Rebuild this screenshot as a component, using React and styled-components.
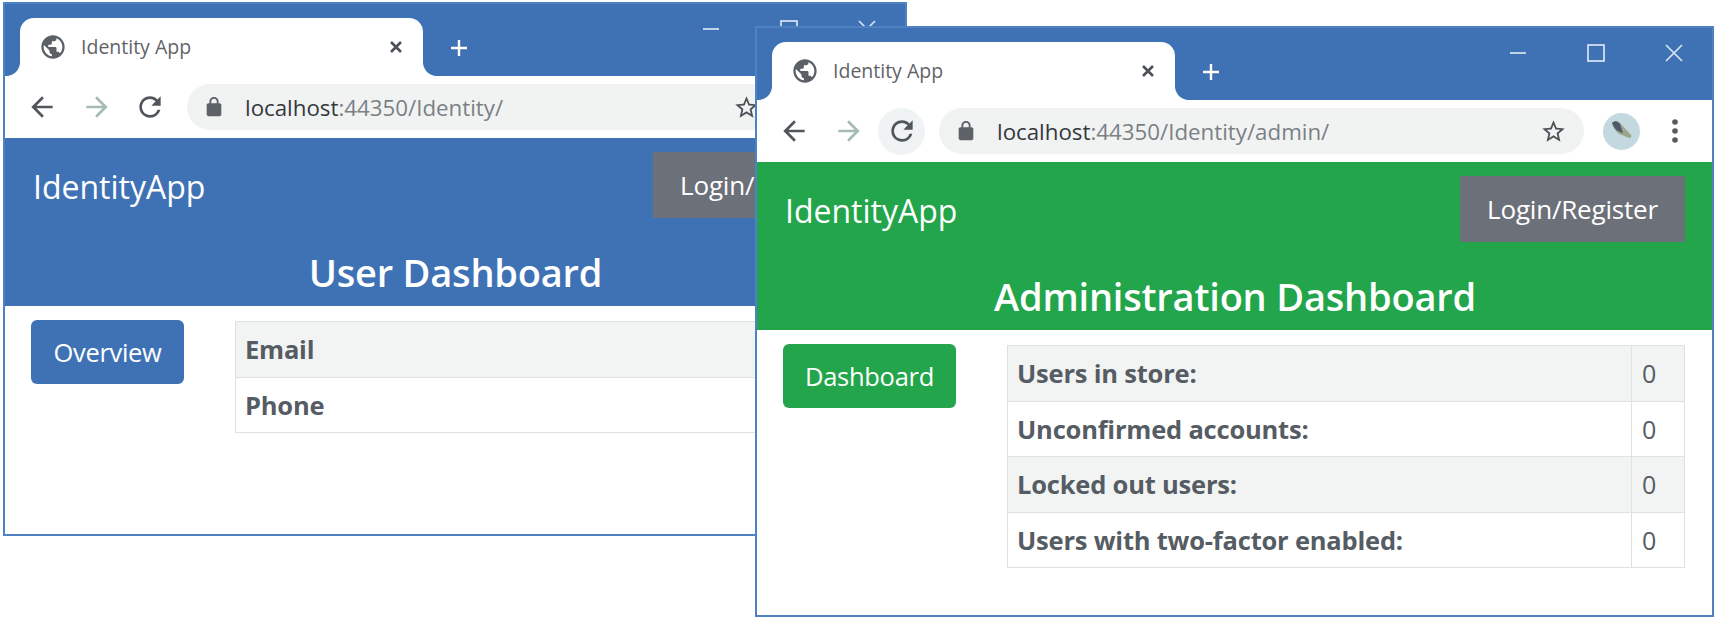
import React from 'react';
import styled, { createGlobalStyle } from 'styled-components';

const GlobalStyle = createGlobalStyle`
  html, body {
    margin: 0;
    padding: 0;
    background: #fff;
    font-family: "Open Sans", "Noto Sans", sans-serif;
  }
`
const Desktop = styled.div`
  position: relative;
  width: 1718px;
  height: 620px;
  overflow: hidden;
  background: #fff;
`
const Window = styled.div`
  position: absolute;
  left: ${p => p.$left}px;
  top: ${p => p.$top}px;
  width: ${p => p.$width}px;
  height: ${p => p.$height}px;
  box-sizing: border-box;
  border: 2px solid #4f82c2;
  background: #fff;
  display: flex;
  flex-direction: column;
  overflow: hidden;
`
const TabStrip = styled.div`
  height: 72px;
  flex: none;
  box-sizing: border-box;
  padding: 14px 0 0 15px;
  background: #3f72b5;
  display: flex;
  align-items: flex-start;
`
const Tab = styled.div`
  position: relative;
  width: 403px;
  height: 58px;
  box-sizing: border-box;
  padding: 0 19px 0 19px;
  background: #fff;
  border-radius: 14px 14px 0 0;
  display: flex;
  align-items: center;
  gap: 14px;
  &::before, &::after {
    content: '';
    position: absolute;
    bottom: 0;
    width: 14px;
    height: 14px;
  }
  &::before {
    left: -14px;
    background: radial-gradient(circle at 0 0, #3f72b5 13.5px, #fff 14.5px);
  }
  &::after {
    right: -14px;
    background: radial-gradient(circle at 100% 0, #3f72b5 13.5px, #fff 14.5px);
  }
`
const TabTitle = styled.span`
  flex: 1;
  font-size: 19.5px;
  color: #5f6368;
  margin-top: -2px;
`
const GlobeIcon = styled.svg`
  width: 28px;
  height: 28px;
  fill: #5a6066;
  flex: none;
`
const TabClose = styled.svg`
  width: 16px;
  height: 16px;
  stroke: #4c5157;
  stroke-width: 2.6;
  fill: none;
  flex: none;
`
const NewTab = styled.svg`
  width: 20px;
  height: 20px;
  margin: 20px 0 0 26px;
  stroke: #fff;
  stroke-width: 2.4;
  fill: none;
  flex: none;
`
const WindowControls = styled.div`
  margin: -14px 0 0 auto;
  padding: 0 29px 0 0;
  display: flex;
  gap: 60px;
  align-items: center;
  height: 50px;
`
const ControlIcon = styled.svg`
  width: 18px;
  height: 18px;
  stroke: #d9e5f2;
  stroke-width: 1.7;
  fill: none;
  flex: none;
`
const Toolbar = styled.div`
  height: 62px;
  flex: none;
  box-sizing: border-box;
  padding: 0 33px 0 13px;
  background: #fff;
  display: flex;
  align-items: center;
`
const NavIcon = styled.svg`
  width: 32px;
  height: 32px;
  flex: none;
  fill: ${p => p.$dim ? '#a6bbb8' : '#50565c'};
`
const NavSlot = styled.div`
  width: 47px;
  height: 47px;
  flex: none;
  margin-left: ${p => p.$gap}px;
  border-radius: 50%;
  background: ${p => p.$active ? '#f0f3f3' : 'transparent'};
  display: flex;
  align-items: center;
  justify-content: center;
`
const Omnibox = styled.div`
  flex: 1;
  height: 46px;
  margin-left: 14px;
  box-sizing: border-box;
  padding: 0 17px 0 16px;
  border-radius: 23px;
  background: #f1f3f3;
  display: flex;
  align-items: center;
`
const LockIcon = styled.svg`
  width: 22px;
  height: 22px;
  fill: #5c6268;
  flex: none;
`
const Url = styled.span`
  flex: 1;
  margin-left: 20px;
  font-size: 22.3px;
  color: #7b8084;
  white-space: nowrap;
`
const UrlHost = styled.span`
  color: #33383c;
`
const StarIcon = styled.svg`
  width: 27px;
  height: 27px;
  fill: #4c5157;
  flex: none;
`
const Avatar = styled.svg`
  width: 37px;
  height: 37px;
  flex: none;
  margin-left: 19px;
`
const MenuDots = styled.svg`
  width: 8px;
  height: 28px;
  flex: none;
  margin-left: 31px;
  fill: #565b60;
`
const Banner = styled.div`
  height: 168px;
  flex: none;
  box-sizing: border-box;
  padding: 14px 27px 0 28px;
  background: ${p => p.$color};
  color: #fff;
`
const NavRow = styled.div`
  display: flex;
  justify-content: space-between;
  align-items: center;
`
const Brand = styled.div`
  font-size: 32px;
  padding-top: 2px;
`
const LoginButton = styled.div`
  width: 225px;
  height: 66px;
  background: #6c7079;
  font-size: 26px;
  letter-spacing: -0.2px;
  display: flex;
  align-items: center;
  justify-content: center;
  box-sizing: border-box;
`
const Title = styled.h1`
  margin: 30px 0 0;
  font-size: 38px;
  line-height: 48px;
  font-weight: 600;
  text-align: center;
  letter-spacing: -0.2px;
`
const Body = styled.div`
  flex: 1;
  display: flex;
  align-items: flex-start;
  padding: 14px 27px 0 26px;
`
const Sidebar = styled.div`
  width: ${p => p.$width}px;
  flex: none;
`
const SideButton = styled.div`
  display: inline-flex;
  align-items: center;
  justify-content: center;
  width: ${p => p.$width}px;
  height: 64px;
  box-sizing: border-box;
  border-radius: 6px;
  background: ${p => p.$color};
  color: #fff;
  font-size: 25.5px;
  letter-spacing: -0.3px;
`
const Table = styled.table`
  flex: 1;
  border-collapse: collapse;
  table-layout: fixed;
  margin-top: 1px;
`
const Row = styled.tr`
  height: 55.6px;
  background: ${p => p.$striped ? '#f2f4f3' : '#fff'};
`
const LabelCell = styled.th`
  border: 1px solid #dee2e6;
  padding: 0 9px;
  font-size: 25.5px;
  font-weight: 700;
  letter-spacing: -0.2px;
  text-align: left;
  color: #555c63;
  white-space: nowrap;
`
const ValueCell = styled.td`
  width: 32px;
  border: 1px solid #dee2e6;
  padding: 0 10px;
  font-size: 25px;
  color: #555c63;
`

const paths = {
  globe: 'M12 2C6.48 2 2 6.48 2 12s4.48 10 10 10 10-4.48 10-10S17.52 2 12 2zm-1 17.93c-3.95-.49-7-3.85-7-7.93 0-.62.08-1.21.21-1.79L9 15v1c0 1.1.9 2 2 2v1.93zm6.9-2.54c-.26-.81-1-1.39-1.9-1.39h-1v-3c0-.55-.45-1-1-1H8v-2h2c.55 0 1-.45 1-1V7h2c1.1 0 2-.9 2-2v-.41c2.93 1.19 5 4.06 5 7.41 0 2.08-.8 3.97-2.1 5.39z',
  back: 'M20 11H7.83l5.59-5.59L12 4l-8 8 8 8 1.41-1.41L7.83 13H20v-2z',
  forward: 'M12 4l-1.41 1.41L16.17 11H4v2h12.17l-5.58 5.59L12 20l8-8z',
  reload: 'M17.65 6.35A7.958 7.958 0 0012 4c-4.42 0-7.99 3.58-7.99 8s3.57 8 7.99 8c3.73 0 6.84-2.55 7.73-6h-2.08A5.99 5.99 0 0112 18c-3.31 0-6-2.69-6-6s2.69-6 6-6c1.66 0 3.14.69 4.22 1.78L13 11h7V4l-2.35 2.35z',
  lock: 'M18 8h-1V6c0-2.76-2.24-5-5-5S7 3.24 7 6v2H6c-1.1 0-2 .9-2 2v10c0 1.1.9 2 2 2h12c1.1 0 2-.9 2-2V10c0-1.1-.9-2-2-2zM9 6c0-1.66 1.34-3 3-3s3 1.34 3 3v2H9V6z',
  star: 'M22 9.24l-7.19-.62L12 2 9.19 8.63 2 9.24l5.46 4.73L5.82 21 12 17.27 18.18 21l-1.63-7.03L22 9.24zM12 15.4l-3.76 2.27 1-4.28-3.32-2.88 4.38-.38L12 6.1l1.71 4.04 4.38.38-3.32 2.88 1 4.28L12 15.4z',
}

const BrowserWindow = ({ left, top, width, height, path, color, heading, sideLabel, sideWidth, sideColumn, rows, active }) => (
  <Window $left={left} $top={top} $width={width} $height={height}>
    <TabStrip>
      <Tab>
        <GlobeIcon viewBox="0 0 24 24"><path d={paths.globe} /></GlobeIcon>
        <TabTitle>Identity App</TabTitle>
        <TabClose viewBox="0 0 16 16"><path d="M3 3l10 10M13 3L3 13" /></TabClose>
      </Tab>
      <NewTab viewBox="0 0 20 20"><path d="M10 2v16M2 10h16" /></NewTab>
      <WindowControls>
        <ControlIcon viewBox="0 0 18 18"><path d="M1 9h16" /></ControlIcon>
        <ControlIcon viewBox="0 0 18 18"><rect x="1" y="1" width="16" height="16" /></ControlIcon>
        <ControlIcon viewBox="0 0 18 18"><path d="M1 1l16 16M17 1L1 17" /></ControlIcon>
      </WindowControls>
    </TabStrip>
    <Toolbar>
      <NavSlot $gap={0}><NavIcon viewBox="0 0 24 24"><path d={paths.back} /></NavIcon></NavSlot>
      <NavSlot $gap={8}><NavIcon $dim viewBox="0 0 24 24"><path d={paths.forward} /></NavIcon></NavSlot>
      <NavSlot $gap={6} $active={active}><NavIcon viewBox="0 0 24 24"><path d={paths.reload} /></NavIcon></NavSlot>
      <Omnibox>
        <LockIcon viewBox="0 0 24 24"><path d={paths.lock} /></LockIcon>
        <Url><UrlHost>localhost</UrlHost>{path}</Url>
        <StarIcon viewBox="0 0 24 24"><path d={paths.star} /></StarIcon>
      </Omnibox>
      <Avatar viewBox="0 0 37 37">
        <circle cx="18.5" cy="18.5" r="18.5" fill="#c4d8e0" />
        <path d="M9 10c3-3 7-2 9 1l10 11c1 2 0 3-2 3l-7-3c-5-1-8-6-10-12z" fill="#9aa58c" />
        <path d="M9 10c3-3 6-2 8 1l3 9c-5-1-9-4-11-10z" fill="#4f5b6b" />
      </Avatar>
      <MenuDots viewBox="0 0 8 28">
        <circle cx="4" cy="5" r="2.8" />
        <circle cx="4" cy="14" r="2.8" />
        <circle cx="4" cy="23" r="2.8" />
      </MenuDots>
    </Toolbar>
    <Banner $color={color}>
      <NavRow>
        <Brand>IdentityApp</Brand>
        <LoginButton>Login/Register</LoginButton>
      </NavRow>
      <Title>{heading}</Title>
    </Banner>
    <Body>
      <Sidebar $width={sideColumn}>
        <SideButton $color={color} $width={sideWidth}>{sideLabel}</SideButton>
      </Sidebar>
      <Table>
        <tbody>
          {rows.map((r, i) => (
            <Row key={r.label} $striped={i % 2 === 0}>
              <LabelCell>{r.label}</LabelCell>
              <ValueCell>{r.value}</ValueCell>
            </Row>
          ))}
        </tbody>
      </Table>
    </Body>
  </Window>
)

const App = () => (
  <Desktop>
    <GlobalStyle />
    <BrowserWindow
      left={3} top={2} width={904} height={534}
      path=":44350/Identity/"
      color="#3f72b5"
      heading="User Dashboard"
      sideLabel="Overview" sideWidth={153} sideColumn={204}
      rows={[{ label: 'Email', value: '' }, { label: 'Phone', value: '' }]}
    />
    <BrowserWindow
      left={755} top={26} width={959} height={591}
      path=":44350/Identity/admin/"
      color="#22a54b"
      heading="Administration Dashboard"
      sideLabel="Dashboard" sideWidth={173} sideColumn={224}
      active
      rows={[
        { label: 'Users in store:', value: 0 },
        { label: 'Unconfirmed accounts:', value: 0 },
        { label: 'Locked out users:', value: 0 },
        { label: 'Users with two-factor enabled:', value: 0 },
      ]}
    />
  </Desktop>
)

export default App;
